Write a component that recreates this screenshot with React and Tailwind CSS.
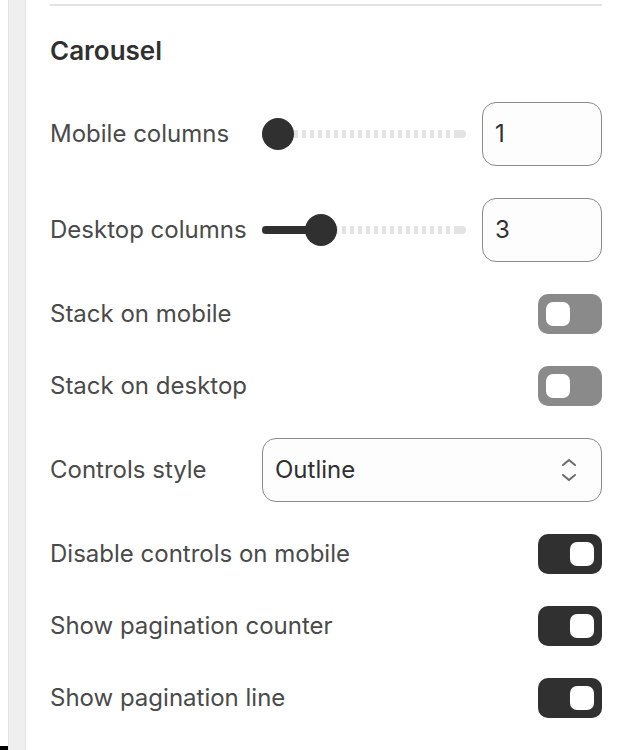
import React from 'react';

const Slider = ({ value, min, max }) => {
  const pos = ((value - min) / (max - min)) * (204 - 32);
  return (
    <div className="relative w-[204px] h-8 flex items-center">
      <div className="flex w-full items-center">
        <div className="flex-1 h-2 bg-[repeating-linear-gradient(90deg,#e3e3e3_0_4px,transparent_4px_8px)]" />
        <div className="w-3 h-2 rounded-r-full bg-[#e3e3e3]" />
      </div>
      {value > min && (
        <div className="absolute left-0 h-2 rounded-full bg-[#303030]" style={{ width: pos + 16 }} />
      )}
      <div className="absolute top-0 w-8 h-8 rounded-full bg-[#303030]" style={{ left: pos }} />
    </div>
  );
};

const Toggle = ({ on }) => (
  <div
    className={`w-16 h-10 rounded-[10px] flex items-center px-2 ${
      on ? 'bg-[#303030] justify-end' : 'bg-[#8a8a8a] justify-start'
    }`}
  >
    <div className="w-6 h-6 rounded-[7px] bg-white" />
  </div>
);

const NumberBox = ({ value }) => (
  <div className="w-[120px] h-16 rounded-[14px] border border-[#8a8a8a] bg-[#fdfdfd] flex items-center px-3 text-[24px] text-[#303030]">
    {value}
  </div>
);

const SliderRow = ({ label, value }) => (
  <div className="flex items-center">
    <span className="w-[212px]">{label}</span>
    <Slider value={value} min={1} max={9} />
    <div className="ml-auto">
      <NumberBox value={value} />
    </div>
  </div>
);

const ToggleRow = ({ label, on }) => (
  <div className="flex items-center justify-between">
    <span>{label}</span>
    <Toggle on={on} />
  </div>
);

export default function App() {
  return (
    <div className="h-[750px] w-[626px] overflow-hidden flex bg-white font-['Inter',sans-serif]">
      {/* Barra lateral */}
      <div className="w-2 flex flex-col justify-end">
        <div className="h-1 bg-black" />
      </div>
      <div className="w-[18px] bg-[#efefef] border-x border-[#e3e3e3]" />

      {/* Panel */}
      <div className="flex-1 px-6 pt-1">
        <div className="h-0.5 bg-[#e3e3e3]" />
        <h2 className="mt-[29px] text-[26px] leading-8 font-semibold text-[#303030]">Carousel</h2>

        <div className="mt-[35px] flex flex-col gap-8 text-[24px] leading-8 text-[#4a4a4a]">
          <SliderRow label="Mobile columns" value={1} />
          <SliderRow label="Desktop columns" value={3} />
          <ToggleRow label="Stack on mobile" on={false} />
          <ToggleRow label="Stack on desktop" on={false} />

          <div className="flex items-center">
            <span className="w-[212px]">Controls style</span>
            <div className="flex-1 h-16 rounded-[14px] border border-[#8a8a8a] bg-[#fdfdfd] flex items-center justify-between pl-3 pr-6 text-[24px] text-[#303030]">
              <span>Outline</span>
              <svg width="16" height="26" viewBox="0 0 16 26" fill="none" stroke="#6b6b6b" strokeWidth="2" strokeLinecap="round" strokeLinejoin="round">
                <path d="M2 8l6-5 6 5" />
                <path d="M2 18l6 5 6-5" />
              </svg>
            </div>
          </div>

          <ToggleRow label="Disable controls on mobile" on />
          <ToggleRow label="Show pagination counter" on />
          <ToggleRow label="Show pagination line" on />
        </div>
      </div>
    </div>
  );
}
